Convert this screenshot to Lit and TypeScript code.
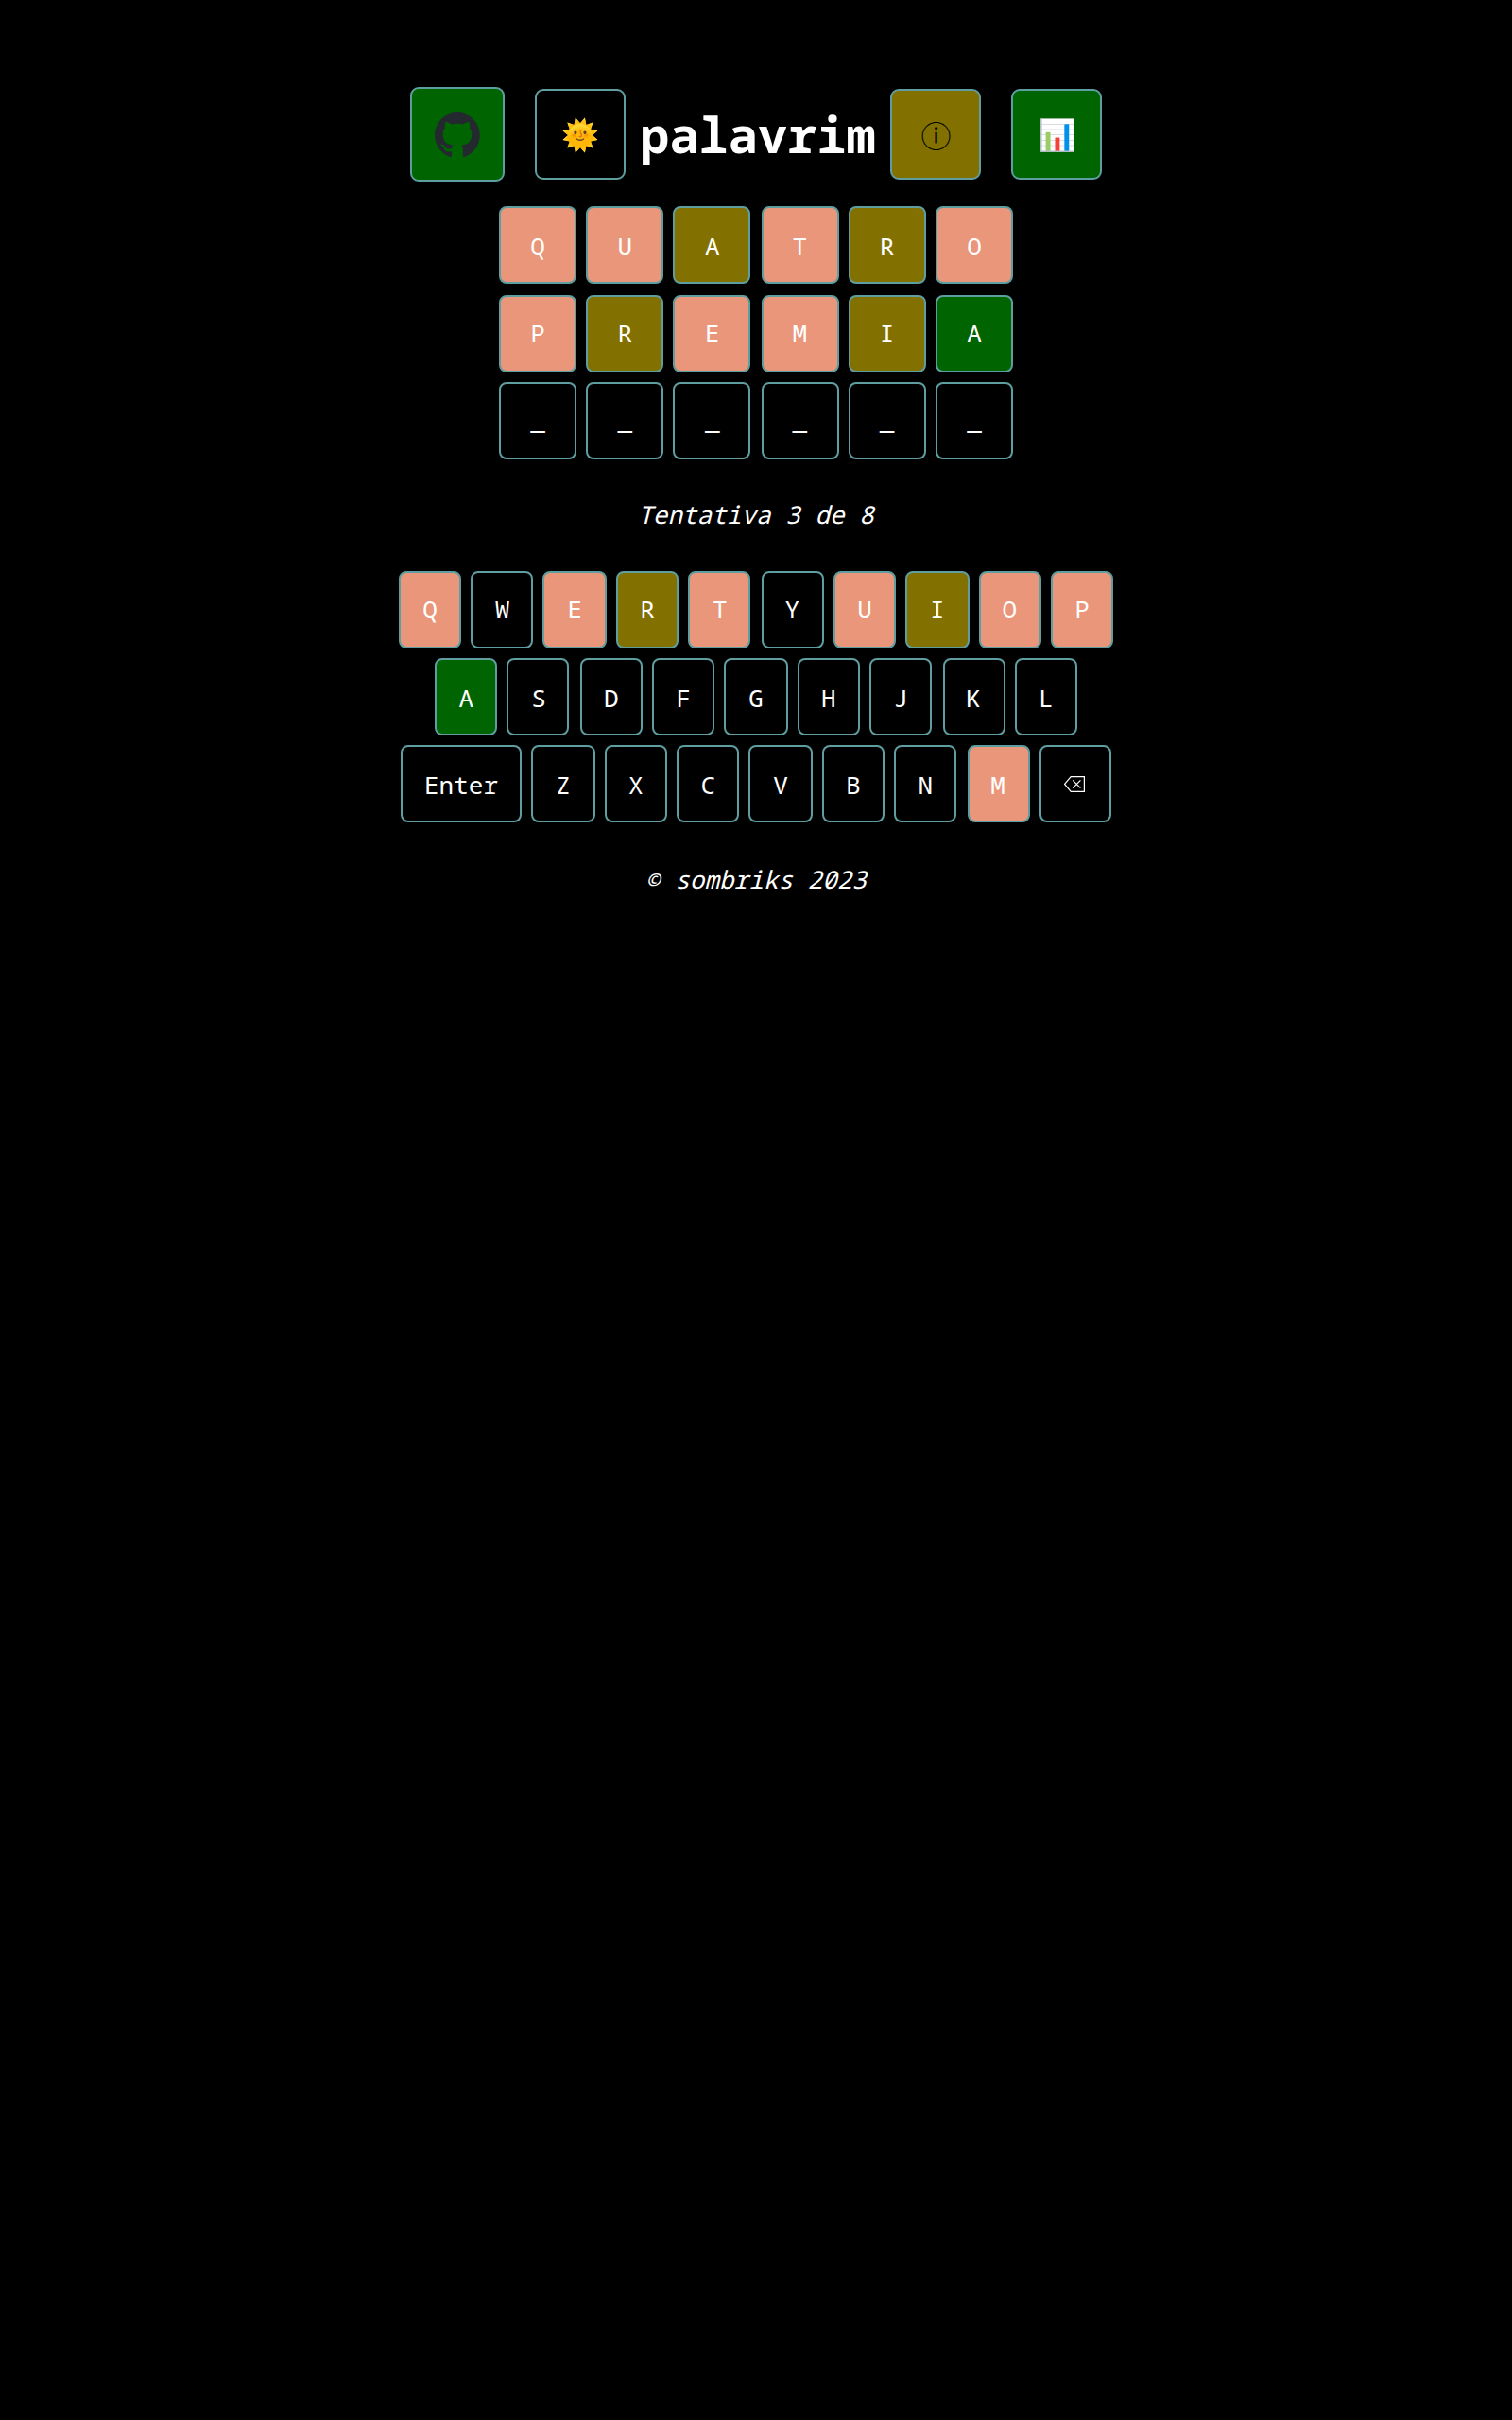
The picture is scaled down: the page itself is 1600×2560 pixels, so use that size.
import { LitElement, html, svg, css } from "lit";
import { customElement, property } from "lit/decorators.js";
import { classMap } from "lit/directives/class-map.js";

type Mark = "" | "miss" | "near" | "hit";

interface Slot {
  label: string;
  mark?: Mark;
  width: number;
  gap?: number;
  /** fine shift of the centred label, px */
  nudge?: number;
}

const k = (label: string, mark: Mark = "", width = 66, gap = 10, nudge = 0): Slot => ({
  label, mark, width, gap, nudge,
});

const BOARD_NUDGE = [0, 0.4, 0.8, -0.8, -0.4, 0];

const boardRow = (letters: string, marks: Mark[]): Slot[] =>
  [...letters].map((c, i) => k(c, marks[i] ?? "", 82, i === 0 ? 0 : i === 3 ? 12 : 10, BOARD_NUDGE[i]));

const BOARD: Slot[][] = [
  boardRow("QUATRO", ["miss", "miss", "near", "miss", "near", "miss"]),
  boardRow("PREMIA", ["miss", "near", "miss", "miss", "near", "hit"]),
  boardRow("______", []),
];

const KEYS: Slot[][] = [
  [
    k("Q", "miss", 66, 0), k("W", "", 66, 10, 0.6), k("E", "miss", 68, 10, 0.3), k("R", "near"),
    k("T", "miss", 66, 10, 0.7), k("Y", "", 66, 12, -0.7), k("U", "miss"),
    k("I", "near", 68, 10, -0.3), k("O", "miss", 66, 10, -0.6), k("P", "miss"),
  ],
  [
    k("A", "hit", 66, 0, 0.3), k("S", "", 66, 10, 1), k("D", "", 66, 12, -0.3), k("F", "", 66, 10, 0.3),
    k("G", "", 68), k("H", "", 66, 10, -0.3), k("J", "", 66, 10, 0.3), k("K", "", 66, 12, -1),
    k("L", "", 66, 10, -0.3),
  ],
  [
    k("Enter", "", 128, 0), k("Z", "", 68), k("X", "", 66, 10, -0.3), k("C", "", 66, 10, 0.3),
    k("V", "", 68), k("B", "", 66, 10, -0.3), k("N", "", 66, 10, 0.3), k("M", "miss", 66, 12, -1),
    k("⌫", "", 76),
  ],
];

const backspace = html`<svg class="erase" viewBox="0 0 26 20" aria-label="Apagar">
  ${svg`<path d="M1.6 9.4 L8.2 1.6 H22.4 V17.4 H8.2 Z M10.2 5.4 L18.4 13.6 M18.4 5.4 L10.2 13.6" />`}
</svg>`;

@customElement("slot-row")
class SlotRow extends LitElement {
  static styles = css`
    :host { display: flex; justify-content: center; }
    .slot {
      box-sizing: border-box;
      height: 82px;
      padding: 0 0 2px;
      border: 2px solid #5f9ea0;
      border-radius: 8px;
      background: #000;
      color: #fff;
      font: inherit;
      line-height: 36px;
      text-align: center;
    }
    .low { padding: 2px 0 0; }
    .miss { background: #e9967a; }
    .near { background: #827000; }
    .hit { background: #006400; }
    .erase {
      display: block;
      width: 26px;
      height: 20px;
      margin: 0 auto;
      fill: none;
      stroke: #fff;
      stroke-width: 1.2;
    }
  `;

  @property({ attribute: false }) slots: Slot[] = [];
  @property({ type: Boolean }) low = false;

  render() {
    return this.slots.map(
      (s) => html`<button
        class=${classMap({
          slot: true,
          low: this.low,
          miss: s.mark === "miss",
          near: s.mark === "near",
          hit: s.mark === "hit",
        })}
        style="width:${s.width}px;margin-left:${s.gap}px;text-indent:${(s.nudge ?? 0) * 2}px"
      >${s.label === "⌫" ? backspace : s.label}</button>`,
    );
  }
}

@customElement("app-root")
class AppRoot extends LitElement {
  static styles = css`
    :host {
      display: flex;
      flex-direction: column;
      align-items: center;
      box-sizing: border-box;
      min-height: 2560px;
      padding-top: 92px;
      background: #000;
      color: #fff;
      font-family: "Noto Sans Mono", "Noto Color Emoji", monospace;
      font-size: 26px;
      line-height: 36px;
    }
    .header { display: flex; align-items: center; height: 100px; }
    .tool {
      box-sizing: border-box;
      display: flex;
      align-items: center;
      justify-content: center;
      width: 96px;
      height: 96px;
      padding: 0;
      border: 2px solid #5f9ea0;
      border-radius: 9px;
      background: #000;
      color: #000;
      font: inherit;
      font-size: 32px;
    }
    .github { width: 100px; height: 100px; margin-right: 32px; background: #006400; }
    .info {
      padding-left: 1px;
      margin-right: 32px;
      background: #827000;
      font-family: "Noto Sans CJK JP", sans-serif;
    }
    .stats { padding-left: 2px; background: #006400; }
    .mark { display: block; width: 48px; height: 47px; }
    .title {
      width: 280px;
      margin: 0;
      font-size: 52px;
      line-height: 72px;
      font-weight: 700;
      text-align: center;
    }
    .board { display: flex; flex-direction: column; gap: 10px; margin-top: 26px; }
    .board slot-row:first-child { margin-bottom: 2px; }
    .keyboard { display: flex; flex-direction: column; gap: 10px; }
    .note { font-style: italic; text-align: center; height: 36px; }
    .attempt { margin: 40px 0 42px; }
    .credit { margin-top: 42px; }
  `;

  render() {
    return html`
      <header class="header">
        <button class="tool github">
          <svg class="mark" viewBox="0 0 98 96"><path fill="#24292f" fill-rule="evenodd" clip-rule="evenodd" d="M48.854 0C21.839 0 0 22 0 49.217c0 21.756 13.993 40.172 33.405 46.69 2.427.49 3.316-1.059 3.316-2.362 0-1.141-.08-5.052-.08-9.127-13.59 2.934-16.42-5.867-16.42-5.867-2.184-5.704-5.42-7.17-5.42-7.17-4.448-3.015.324-3.015.324-3.015 4.934.326 7.523 5.052 7.523 5.052 4.367 7.496 11.404 5.378 14.235 4.074.404-3.178 1.699-5.378 3.074-6.6-10.839-1.141-22.243-5.378-22.243-24.283 0-5.378 1.94-9.778 5.014-13.2-.485-1.222-2.184-6.275.486-13.038 0 0 4.125-1.304 13.426 5.052a46.97 46.97 0 0 1 12.214-1.63c4.125 0 8.33.571 12.213 1.63 9.302-6.356 13.427-5.052 13.427-5.052 2.67 6.763.97 11.816.485 13.038 3.155 3.422 5.015 7.822 5.015 13.2 0 18.905-11.404 23.06-22.324 24.283 1.78 1.548 3.316 4.481 3.316 9.126 0 6.6-.08 11.897-.08 13.526 0 1.304.89 2.853 3.316 2.364 19.412-6.52 33.405-24.935 33.405-46.691C97.707 22 75.788 0 48.854 0z"/></svg>
        </button>
        <button class="tool theme">🌞</button>
        <h1 class="title">palavrim</h1>
        <button class="tool info">ⓘ</button>
        <button class="tool stats">📊</button>
      </header>
      <main class="board">
        ${BOARD.map((r, i) => html`<slot-row .slots=${r} .low=${i === 0}></slot-row>`)}
      </main>
      <div class="note attempt">Tentativa 3 de 8</div>
      <section class="keyboard">
        ${KEYS.map((r, i) => html`<slot-row .slots=${r} .low=${i > 0}></slot-row>`)}
      </section>
      <footer class="note credit">© sombriks 2023</footer>
    `;
  }
}
